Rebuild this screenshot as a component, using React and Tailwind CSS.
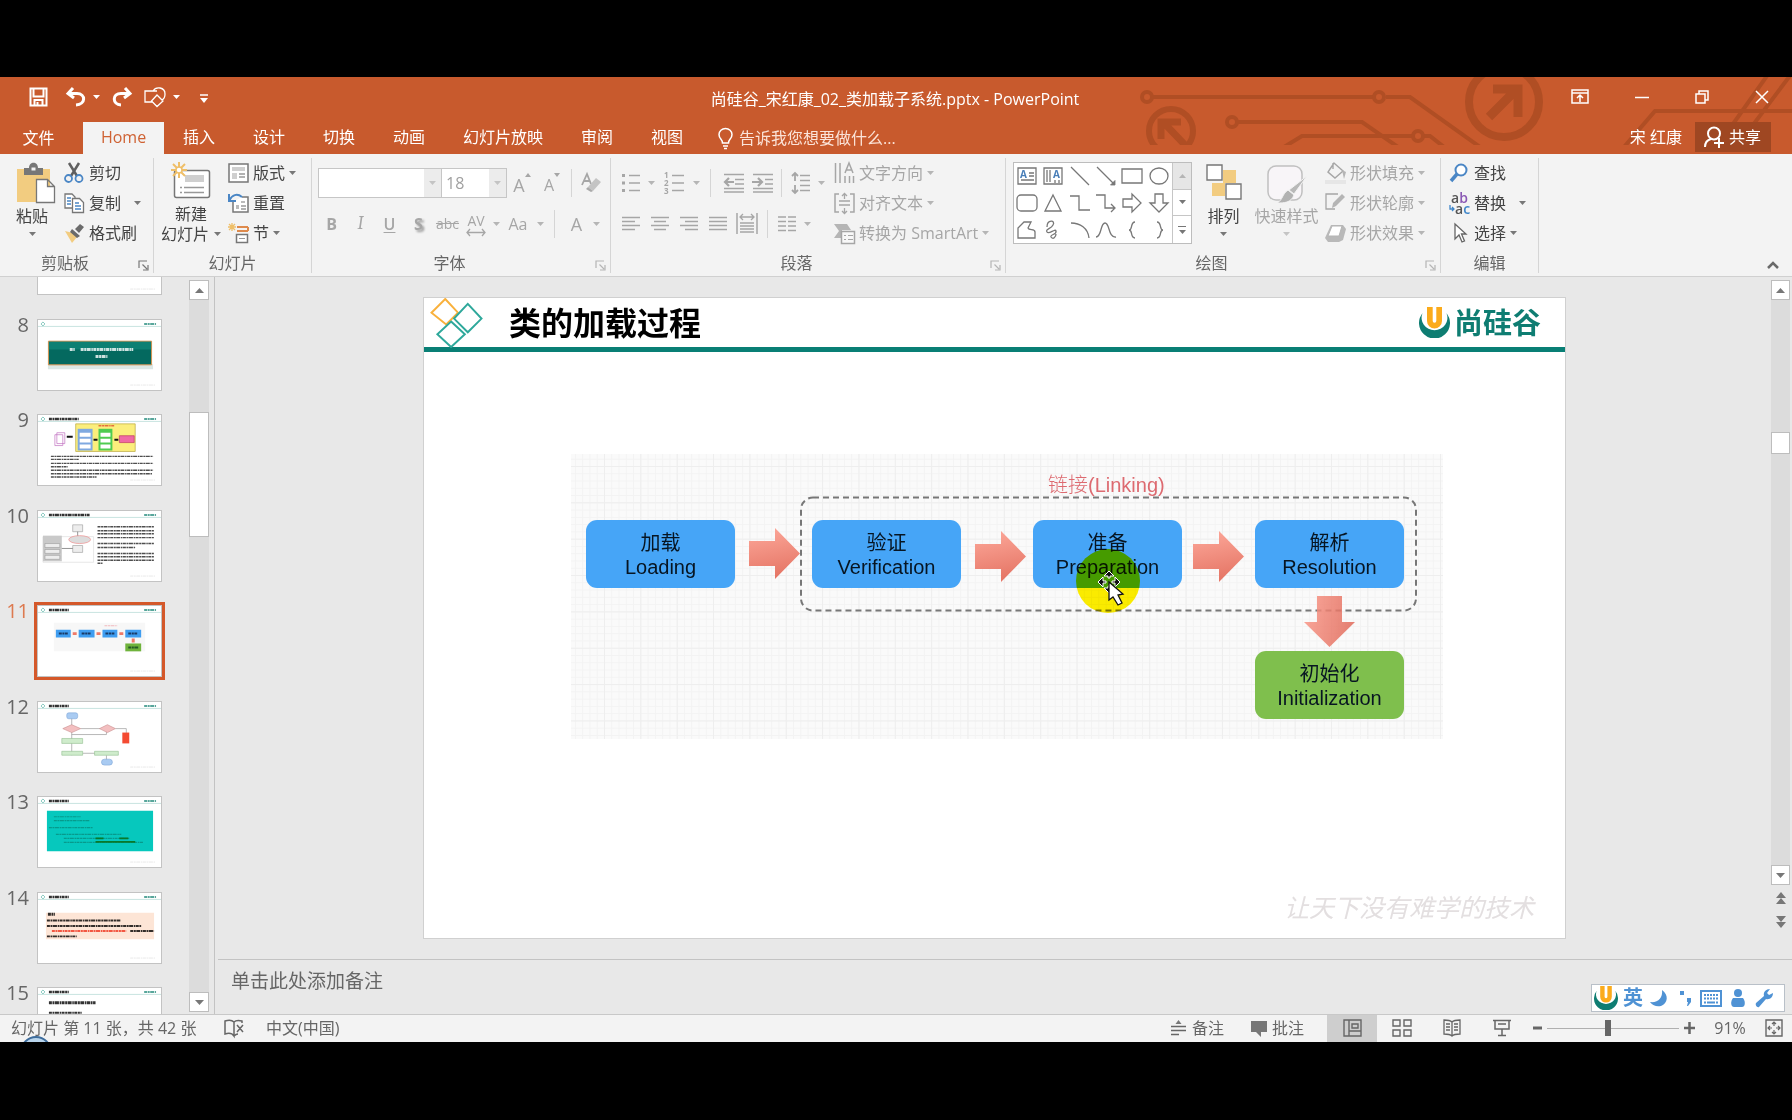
import React from "react";

const cx = (...names) => names.filter(Boolean).join(" ");

/* ---------- small shared pieces ---------- */

function Caret({ className = "text-[#777]" }) {
  return (
    <svg className={cx("h-1 w-[7px] shrink-0", className)} viewBox="0 0 7 4" fill="currentColor">
      <path d="M0 0h7L3.500 4z" />
    </svg>
  );
}

function Svg({ w = 20, h = 20, children, className }) {
  return (
    <svg width={w} height={h} viewBox={`0 0 ${w} ${h}`} fill="none" className={cx("shrink-0 overflow-visible", className)} aria-hidden="true">
      {children}
    </svg>
  );
}

function ULogo({ className }) {
  return (
    <svg viewBox="0 0 30 30" className={className} fill="none" aria-hidden="true">
      <path d="M3.400 6A15 15 0 1 0 26.600 6A12.500 12 0 1 1 3.400 6z" fill="#0e7d72" />
      <path d="M10.500 0v13.500c0 6 9 6 9 0V0" stroke="#fbab1b" strokeWidth="5.500" />
    </svg>
  );
}

function Group({ label, width, launcher, children }) {
  return (
    <section className={cx("flex shrink-0 flex-col border-r border-[#d5d5d5]", width)} aria-label={label}>
      <div className="flex h-[95px]">{children}</div>
      <div className="flex h-5 items-center">
        <h2 className="flex-1 text-center">{label}</h2>
        {launcher && (
          <button type="button" aria-label={`${label}设置`} className={cx("mt-1 pr-1 pl-2", launcher)}>
            <Svg w={11} h={11}>
              <path d="M1 8V1h8M4.500 4.500L9 9M10 5v5H5" stroke="currentColor" strokeWidth="1.200" />
            </Svg>
          </button>
        )}
      </div>
    </section>
  );
}

function RowButton({ icon, label, caret, wide, disabled }) {
  return (
    <button
      type="button"
      disabled={disabled}
      className={cx("flex h-[30px] items-center whitespace-nowrap", disabled ? "text-[#a6a6a6]" : "text-[#444]")}
    >
      <span className="flex w-[25px] shrink-0 items-center">{icon}</span>
      {label}
      {caret && <Caret className={cx(wide ? "ml-[13px]" : "ml-1", disabled ? "text-[#b5b5b5]" : "text-[#777]")} />}
    </button>
  );
}

function Cell({ children, width = "w-[29px]", label }) {
  return (
    <button type="button" disabled aria-label={label} className={cx("flex h-7 shrink-0 items-center justify-center text-[#a6a6a6]", width)}>
      {children}
    </button>
  );
}

const CaretCell = () => (
  <span className="flex w-3 justify-center">
    <Caret className="text-[#b5b5b5]" />
  </span>
);

const Rule = ({ className }) => <span className={cx("h-7 w-px bg-[#d5d5d5]", className)} />;

/* ---------- title bar ---------- */

function Circuit() {
  return (
    <svg className="pointer-events-none absolute top-0 right-0 h-[68px] w-[652px]" viewBox="0 0 652 68" fill="none" stroke="#b04e24" aria-hidden="true">
      <g strokeWidth="4">
        <circle cx="7" cy="20" r="5" />
        <path d="M12 20h222M246 20h24L340 70" />
        <circle cx="239" cy="20" r="5" />
        <circle cx="92" cy="45" r="5" />
        <path d="M97 45h125L258 70" />
        <path d="M144 70l18-11h111M284 59h6l14 11" />
        <circle cx="278" cy="59" r="5" />
        <path d="M484 70l31-36h137M581 64L629-4M601 64L652-4" />
      </g>
      <circle cx="31" cy="54" r="22" strokeWidth="6" />
      <path d="M45 68L24 46M21 62V45h20" strokeWidth="7" />
      <circle cx="364" cy="25" r="35" strokeWidth="8" />
      <path d="M349 40L376 13M353 12h25v28" strokeWidth="9" />
    </svg>
  );
}

function TitleBar() {
  return (
    <div className="relative flex h-[45px] items-center pb-1 text-white">
      <div className="flex w-[230px] items-center pb-[2px] pl-[29px]">
        <button type="button" aria-label="保存">
          <Svg w={19} h={20}>
            <path d="M1.500 1.500h16v17h-16zM4.500 1.500v8h10v-8M5.500 18v-5h8v5M8.500 18v-3" stroke="currentColor" strokeWidth="2" />
          </Svg>
        </button>
        <button type="button" aria-label="撤消" className="ml-[18px] flex items-center gap-[7px]">
          <Svg w={20} h={20}>
            <path d="M7 1L2 6.500 8 11M2.500 6.500H11c9 0 9 11-1 11.500" stroke="currentColor" strokeWidth="3" />
          </Svg>
          <Caret className="text-white" />
        </button>
        <button type="button" aria-label="恢复" className="ml-3">
          <Svg w={20} h={20}>
            <path d="M13 1l5 5.500-6 4.500M17.500 6.500H9c-9 0-9 11 0 11.500" stroke="currentColor" strokeWidth="3" />
          </Svg>
        </button>
        <button type="button" aria-label="形状" className="ml-3 flex items-center gap-[7px]">
          <Svg w={22} h={20}>
            <path d="M8 15H1V4h12M9 4c3-5 12-4 12 3 0 3-1 5-3 6M13 8l6 6-6 5.500L7.500 14z" stroke="currentColor" strokeWidth="1.300" />
          </Svg>
          <Caret className="text-white" />
        </button>
        <button type="button" aria-label="自定义快速访问工具栏" className="mt-1 ml-5">
          <Svg w={9} h={9}>
            <path d="M0 1h8" stroke="currentColor" strokeWidth="1.500" />
            <path d="M0 4h8L4 9z" fill="currentColor" />
          </Svg>
        </button>
      </div>
      <h1 className="mt-[2px] flex-1 pr-[2px] text-center">尚硅谷_宋红康_02_类加载子系统.pptx - PowerPoint</h1>
      <div className="flex w-[230px] items-center justify-end pr-[23px] pb-[2px]">
        <button type="button" aria-label="功能区显示选项">
          <Svg w={18} h={15}>
            <path d="M1 1h16v13H1zM1 4h16M9 13V6.500M6 9l3-3 3 3" stroke="currentColor" strokeWidth="1.500" />
          </Svg>
        </button>
        <button type="button" aria-label="最小化" className="ml-[46px]">
          <Svg w={14} h={14}>
            <path d="M0 7.500h14" stroke="currentColor" strokeWidth="1.500" />
          </Svg>
        </button>
        <button type="button" aria-label="还原" className="ml-[46px]">
          <Svg w={14} h={14}>
            <path d="M1 4h9v9H1zM4 4V1h9v9h-3" stroke="currentColor" strokeWidth="1.500" />
          </Svg>
        </button>
        <button type="button" aria-label="关闭" className="ml-[46px]">
          <Svg w={14} h={14}>
            <path d="M1 1l12 12M13 1L1 13" stroke="currentColor" strokeWidth="1.500" />
          </Svg>
        </button>
      </div>
    </div>
  );
}

function TabBar() {
  const tabs = ["插入", "设计", "切换", "动画", "幻灯片放映", "审阅", "视图"];
  return (
    <nav className="relative flex h-8 text-white">
      <button type="button" className="w-[83px] pr-2 pl-[2px]">文件</button>
      <button type="button" aria-current="page" className="w-[81px] bg-[#f3f3f3] pb-[2px] text-[#cf6233]">Home</button>
      {tabs.map((t) => (
        <button type="button" key={t} className="px-[19px] pb-[2px]">{t}</button>
      ))}
      <label className="ml-4 flex items-center gap-[6px]">
        <Svg w={15} h={21}>
          <path d="M4.500 15c0-4-3.500-4-3.500-8.500a6.500 6 0 0 1 13 0C14 11 10.500 11 10.500 15zM5 18h5M6 20.500h3" stroke="currentColor" strokeWidth="1.500" />
        </Svg>
        <input aria-label="告诉我您想要做什么" placeholder="告诉我您想要做什么..." className="w-44 bg-transparent outline-none placeholder:text-[#fbe3d8]" />
      </label>
      <div className="ml-auto flex items-start pr-[21px]">
        <button type="button" className="mr-[13px] h-[30px]">宋 红康</button>
        <button type="button" className="flex h-[30px] w-[76px] items-center gap-1 bg-[#9f4722] pl-2">
          <Svg w={22} h={22}>
            <circle cx="11" cy="7.500" r="6" stroke="currentColor" strokeWidth="2" />
            <path d="M2 21c0-4 2-7 6-8M16 12v10M11 17h10" stroke="currentColor" strokeWidth="2" />
          </Svg>
          共享
        </button>
      </div>
    </nav>
  );
}

/* ---------- ribbon ---------- */

function ClipboardGroup() {
  return (
    <Group label="剪贴板" width="w-[154px]" launcher="text-[#777]">
      <button type="button" className="flex w-16 flex-col items-center text-[#444]">
        <Svg w={40} h={42} className="mt-1 ml-2">
          <path d="M1 7h33v33H1z" fill="#f2cc80" />
          <path d="M8 6h5c0-7 9-7 9 0h5v7H8z" fill="#777" />
          <path d="M15.500 5.500h4v3h-4z" fill="#f3f3f3" />
          <path d="M20.500 17.500h11l7 7v16h-18zM31.500 17.500v7h7" fill="#fff" stroke="#777" strokeWidth="1.300" />
        </Svg>
        <span className="h-6 leading-6">粘贴</span>
        <Caret className="mt-1 text-[#777]" />
      </button>
      <div className="flex flex-col items-start">
        <RowButton
          label="剪切"
          icon={
            <Svg>
              <path d="M5 0l8 13M15 0L7 13" stroke="#5f5f5f" strokeWidth="2.500" />
              <circle cx="4.500" cy="15.500" r="3.500" stroke="#4a86c5" strokeWidth="1.800" />
              <circle cx="15" cy="15.500" r="3.500" stroke="#4a86c5" strokeWidth="1.800" />
            </Svg>
          }
        />
        <RowButton
          label="复制"
          caret
          wide
          icon={
            <Svg>
              <path d="M1 1h7l3 3v11H1z" fill="#fff" stroke="#777" strokeWidth="1.300" />
              <path d="M3 5h4M3 8h4M3 11h4" stroke="#4a86c5" strokeWidth="1.300" />
              <path d="M8.500 5.500h7l4 4v10h-11z" fill="#fff" stroke="#777" strokeWidth="1.300" />
              <path d="M11 10h4M11 13h6M11 16h6" stroke="#4a86c5" strokeWidth="1.300" />
            </Svg>
          }
        />
        <RowButton
          label="格式刷"
          icon={
            <Svg>
              <path d="M1 8l8 2 4 4-5 6z" fill="#f2cc80" />
              <path d="M8 6l8 7-3 2-7-6zM11 6l5-5 4 3-5 6z" fill="#6b6b6b" />
            </Svg>
          }
        />
      </div>
    </Group>
  );
}

function SlidesGroup() {
  return (
    <Group label="幻灯片" width="w-[158px]">
      <button type="button" className="flex w-[74px] flex-col items-center text-[#444]">
        <Svg w={40} h={38} className="mt-1">
          <rect x="3.500" y="8.500" width="35" height="27" rx="2" fill="#fff" stroke="#777" strokeWidth="1.500" />
          <path d="M14 13h19v7H14z" fill="#cfcfcf" />
          <path d="M9 25.500h2M9 30.500h2M13 25.500h20M13 30.500h20" stroke="#999" strokeWidth="1.300" />
          <path d="M8 0v16M0 8h16M2 2l12 12M14 2L2 14" stroke="#efbf68" strokeWidth="2" />
          <circle cx="8" cy="8" r="3" fill="#fff" stroke="#efbf68" strokeWidth="1.500" />
        </Svg>
        <span className="mt-1 h-5 leading-5">新建</span>
        <span className="flex h-5 items-center gap-[5px] leading-5 whitespace-nowrap">
          幻灯片 <Caret />
        </span>
      </button>
      <div className="flex flex-col items-start">
        <RowButton
          label="版式"
          caret
          icon={
            <Svg w={21}>
              <path d="M1 1h19v18H1z" fill="#fff" stroke="#777" strokeWidth="1.500" />
              <path d="M4 4h13v4H4zM4 10h5v6H4z" fill="#cfcfcf" />
              <path d="M11 11h6M11 14h6" stroke="#999" strokeWidth="1.300" />
            </Svg>
          }
        />
        <RowButton
          label="重置"
          icon={
            <Svg w={21}>
              <path d="M5 9v10h15V4h-6" fill="#fff" stroke="#777" strokeWidth="1.500" />
              <path d="M8 12h3v4H8zM13 8h4v2h-4z" fill="#bbb" />
              <path d="M13 13h5M13 16h5" stroke="#999" strokeWidth="1.300" />
              <path d="M1 1v7h7M1.500 7C4 2 9 0 14 4" stroke="#4a86c5" strokeWidth="2" />
            </Svg>
          }
        />
        <RowButton
          label="节"
          caret
          icon={
            <Svg w={21}>
              <path d="M4 0v8M0 4h8M1 1l6 6M7 1L1 7" stroke="#efbf68" strokeWidth="1.300" />
              <path d="M9 4h11M9 8h11M20 4v4" stroke="#de8a4c" strokeWidth="2" />
              <path d="M8.500 11.500h11v8h-11z" fill="#fff" stroke="#777" strokeWidth="1.500" />
              <path d="M11 15.500h6" stroke="#999" />
            </Svg>
          }
        />
      </div>
    </Group>
  );
}

function FontGroup() {
  return (
    <Group label="字体" width="w-[299px]" launcher="text-[#b5b5b5]">
      <div className="flex flex-col">
        <div className="mt-[10px] flex h-[30px] items-center pl-[6px]">
          <div className="relative">
            <select aria-label="字体" className="block h-[30px] w-[124px] appearance-none border border-[#c6c6c6] bg-white outline-none">
              <option> </option>
            </select>
            <span className="pointer-events-none absolute inset-y-px right-px flex w-[17px] items-center justify-center bg-[#ececec]">
              <Caret className="text-[#c4c4c4]" />
            </span>
          </div>
          <div className="relative">
            <select aria-label="字号" className="block h-[30px] w-[65px] appearance-none border border-l-0 border-[#c6c6c6] bg-white pl-1 text-[#a0a0a0] outline-none">
              <option>18</option>
            </select>
            <span className="pointer-events-none absolute inset-y-px right-px flex w-[17px] items-center justify-center bg-[#ececec]">
              <Caret className="text-[#c4c4c4]" />
            </span>
          </div>
          <Cell label="增大字号" width="w-[30px]">
            <span className="pt-1 text-lg">A</span>
            <svg className="mb-4 h-1 w-[6px]" viewBox="0 0 6 4" fill="currentColor"><path d="M0 4h6L3 0z" /></svg>
          </Cell>
          <Cell label="减小字号" width="w-[30px]">
            <span className="pt-1">A</span>
            <svg className="mb-4 h-1 w-[6px]" viewBox="0 0 6 4" fill="currentColor"><path d="M0 0h6L3 4z" /></svg>
          </Cell>
          <Rule className="ml-1" />
          <Cell label="清除格式" width="w-[38px]">
            <Svg>
              <path d="M1 12L6 1l4 10M3 8h6" stroke="currentColor" strokeWidth="1.800" />
              <path d="M7 14l8-9 5 4-8 9z" fill="#c4c4c4" />
              <path d="M5 16l2-2 5 4-2 1z" fill="#a9a9a9" />
            </Svg>
          </Cell>
        </div>
        <div className="mt-3 flex h-7 items-center pl-[5px]">
          <Cell label="加粗"><b>B</b></Cell>
          <Cell label="倾斜"><i className="font-serif text-lg">I</i></Cell>
          <Cell label="下划线"><span className="font-semibold underline underline-offset-2">U</span></Cell>
          <Cell label="文字阴影"><b className="drop-shadow-[2px_2px_1px_#999]">S</b></Cell>
          <Cell label="删除线"><span className="text-sm line-through">abc</span></Cell>
          <Cell label="字符间距" width="w-7">
            <span className="flex flex-col items-center">
              <span className="h-4 text-sm leading-4">AV</span>
              <Svg w={20} h={7}>
                <path d="M1 3.500h18M4 0L1 3.500 4 7M16 0l3 3.500L16 7" stroke="currentColor" strokeWidth="1.300" />
              </Svg>
            </span>
          </Cell>
          <CaretCell />
          <Cell label="更改大小写" width="w-8">Aa</Cell>
          <CaretCell />
          <Rule className="mx-2" />
          <Cell label="字体颜色" width="w-[27px]"><span className="text-lg">A</span></Cell>
          <CaretCell />
        </div>
      </div>
    </Group>
  );
}

function Lines({ rows }) {
  return (
    <Svg>
      {rows.map(([a, b], i) => (
        <path key={i} d={`M${a} ${3.5 + i * 4}H${b}`} stroke="currentColor" strokeWidth="1.500" />
      ))}
    </Svg>
  );
}

function ParagraphGroup() {
  return (
    <Group label="段落" width="w-[395px]" launcher="text-[#b5b5b5]">
      <div className="w-[223px] pl-[5px]">
        <div className="mt-[11px] flex h-7 items-center">
          <Cell label="项目符号">
            <Svg>
              <path d="M1 2.500h3M1 10h3M1 17.500h3" stroke="currentColor" strokeWidth="3" />
              <path d="M8 2.500h11M8 10h11M8 17.500h11" stroke="currentColor" strokeWidth="1.500" />
            </Svg>
          </Cell>
          <CaretCell />
          <Cell label="编号" width="w-[33px]">
            <Svg w={20} h={22}>
              <g fill="currentColor" fontSize="8" fontWeight="bold">
                <text x="0" y="6">1</text>
                <text x="0" y="14">2</text>
                <text x="0" y="22">3</text>
              </g>
              <path d="M8 3.500h12M8 11h12M8 18.500h12" stroke="currentColor" strokeWidth="1.500" />
            </Svg>
          </Cell>
          <CaretCell />
          <Rule className="mx-2" />
          <Cell label="减少缩进">
            <Svg w={22}>
              <path d="M1 1.500h20M12 6.500h9M12 11h9M1 15.500h20M1 19h20" stroke="currentColor" strokeWidth="1.500" />
              <path d="M11 9H2M6 5L2 9l4 4" stroke="currentColor" strokeWidth="2.200" />
            </Svg>
          </Cell>
          <Cell label="增加缩进">
            <Svg w={22}>
              <path d="M1 1.500h20M13 6.500h8M13 11h8M1 15.500h20M1 19h20" stroke="currentColor" strokeWidth="1.500" />
              <path d="M0 9h9M6 5l4 4-4 4" stroke="currentColor" strokeWidth="2.200" />
            </Svg>
          </Cell>
          <Rule className="mx-1" />
          <Cell label="行距">
            <Svg w={20} h={22}>
              <path d="M4 1v8M1 4l3-3 3 3M4 13v8M1 18l3 3 3-3" stroke="currentColor" strokeWidth="1.800" />
              <path d="M9 3.500h10M9 8.500h10M9 13.500h10M9 18.500h10" stroke="currentColor" strokeWidth="1.500" />
            </Svg>
          </Cell>
          <CaretCell />
        </div>
        <div className="mt-[13px] flex h-7 items-center">
          <Cell label="左对齐"><Lines rows={[[1, 19], [1, 14], [1, 19], [1, 14]]} /></Cell>
          <Cell label="居中"><Lines rows={[[1, 19], [4, 16], [1, 19], [4, 16]]} /></Cell>
          <Cell label="右对齐"><Lines rows={[[1, 19], [6, 19], [1, 19], [6, 19]]} /></Cell>
          <Cell label="两端对齐"><Lines rows={[[1, 19], [1, 19], [1, 19], [1, 19]]} /></Cell>
          <Cell label="分散对齐">
            <Svg w={22} h={22}>
              <path d="M1 0v21M21 0v21M4 10h14M4 13h14M4 16h14M4 19h14" stroke="currentColor" strokeWidth="1.500" />
              <path d="M4 4h14M7 1L4 4l3 3M15 1l3 3-3 3" stroke="currentColor" strokeWidth="1.300" />
            </Svg>
          </Cell>
          <Rule className="mr-1 ml-[6px]" />
          <Cell label="分栏">
            <Svg>
              <path d="M1 3h8M1 7.500h8M1 12h8M1 16.500h8M11 3h8M11 7.500h8M11 12h8M11 16.500h8" stroke="currentColor" strokeWidth="1.600" />
            </Svg>
          </Cell>
          <CaretCell />
        </div>
      </div>
      <div className="flex flex-col items-start">
        <RowButton
          label="文字方向"
          caret
          disabled
          icon={
            <Svg w={21} h={22}>
              <path d="M1.500 1v20M6 1v20M11 14v7M15.500 14v7M19.500 14v7M11 11l4-10 4 10M12 8h6" stroke="currentColor" strokeWidth="1.500" />
            </Svg>
          }
        />
        <RowButton
          label="对齐文本"
          caret
          disabled
          icon={
            <Svg w={21} h={21}>
              <path d="M5 1H1v18h4M16 1h4v18h-4" stroke="currentColor" strokeWidth="1.500" />
              <path d="M10.500 6V1M8 3l2.500-2.500L13 3M10.500 15v5M8 18l2.500 2.500L13 18M5 8h11M5 12h11" stroke="currentColor" strokeWidth="1.300" />
            </Svg>
          }
        />
        <RowButton
          label="转换为 SmartArt"
          caret
          disabled
          icon={
            <Svg w={21} h={21}>
              <path d="M0 1h13l4 6H8v8H0l5-7z" fill="#b5b5b5" />
              <path d="M7.500 8.500h13v12h-13z" fill="#f8f8f8" stroke="currentColor" strokeWidth="1.500" />
              <path d="M10 12.500h2M10 16.500h2M14 12.500h5M14 16.500h5" stroke="currentColor" strokeWidth="1.200" />
            </Svg>
          }
        />
      </div>
    </Group>
  );
}

const shapes = [
  <g key="a"><path d="M1 2h18v16H1zM12 7h5M12 10h5M4 14h13" /><text x="3" y="12" fontSize="10" fontWeight="bold" fill="#4a7fb8" stroke="none">A</text></g>,
  <g key="b"><path d="M1 2h18v16H1zM4 4v12M7 4v12M12 14v3M16 14v3" /><text x="10" y="12" fontSize="10" fontWeight="bold" fill="#4a7fb8" stroke="none">A</text></g>,
  <path key="c" d="M1 1l18 18" />,
  <g key="d"><path d="M1 1l17 17" /><path d="M19 19v-4.500L14.500 19z" fill="#777" strokeWidth=".8" /></g>,
  <path key="e" d="M0 3h20v14H0z" />,
  <ellipse key="f" cx="10" cy="10" rx="9" ry="8" />,
  <rect key="g" x="0" y="2" width="20" height="16" rx="4" />,
  <path key="h" d="M10 2l8 16H2z" />,
  <path key="i" d="M0 3h9v14h11" />,
  <path key="j" d="M0 2h9v13h9M15 11l4 4-4 4" />,
  <path key="k" d="M1 6h9V1l9 9-9 9v-5H1z" />,
  <path key="l" d="M6 1v9H1l9 9 9-9h-5V1z" />,
  <path key="m" d="M1 18V8l6-6h7l-3 6c1 3 7 0 7 4v6z" />,
  <path key="n" d="M4 7c0-8 9-7 6-2-2 4-8 4-6 7s8-4 9-1c1 4-6 3-5 6 2 3 5 0 5-3" />,
  <path key="o" d="M1 3c9 0 17 5 18 15" />,
  <path key="p" d="M0 17C6 17 4 3 9 3s3 15 11 14" />,
  <path key="q" d="M13 2c-5 0-2 8-6 8 4 0 1 8 6 8" />,
  <path key="r" d="M8 2c5 0 2 8 6 8-4 0-1 8-6 8" />,
];

function DrawingGroup() {
  return (
    <Group label="绘图" width="w-[435px]" launcher="text-[#b5b5b5]">
      <div className="mt-1 ml-[7px] flex h-[82px] w-[179px] shrink-0 border border-[#bdbdbd] bg-white">
        <div className="grid flex-1 grid-cols-6 grid-rows-3">
          {shapes.map((shape, i) => (
            <button type="button" key={i} aria-label={`形状 ${i + 1}`} className="flex items-center justify-center">
              <svg className="size-5 overflow-visible" viewBox="0 0 20 20" fill="none" stroke="#777" strokeWidth="1.300">{shape}</svg>
            </button>
          ))}
        </div>
        <div className="grid w-[19px] grid-rows-3 divide-y divide-[#c6c6c6] border-l border-[#c6c6c6]">
          <button type="button" aria-label="上一行" className="flex items-center justify-center bg-[#e6e6e6]">
            <Caret className="rotate-180 text-[#b5b5b5]" />
          </button>
          <button type="button" aria-label="下一行" className="flex items-center justify-center"><Caret /></button>
          <button type="button" aria-label="其他" className="flex flex-col items-center justify-center gap-[3px]">
            <span className="h-px w-2 bg-[#777]" />
            <Caret />
          </button>
        </div>
      </div>
      <button type="button" className="ml-[7px] flex w-[49px] flex-col items-center text-[#444]">
        <Svg w={36} h={38} className="mt-[6px]">
          <path d="M17 6h13v13H17zM6 19h13v13H6z" fill="#f2cc80" />
          <path d="M1 1h15v15H1zM20 20h15v15H20z" fill="#fff" stroke="#777" strokeWidth="1.400" />
        </Svg>
        <span className="mt-[2px] h-6 leading-6">排列</span>
        <Caret className="mt-1 text-[#777]" />
      </button>
      <button type="button" disabled className="flex w-[77px] flex-col items-center whitespace-nowrap text-[#a6a6a6]">
        <Svg w={40} h={40} className="mt-[6px]">
          <rect x="1" y="2" width="34" height="34" rx="8" fill="#f8f5f8" stroke="#c0c0c0" strokeWidth="1.500" />
          <path d="M40 12L27 30l-5-4z" fill="#b9b9b9" stroke="#f3f3f3" />
          <path d="M21 26l6 5c-3 8-10 8-17 8 6-3 5-9 11-13z" fill="#b2b2b2" stroke="#f3f3f3" />
        </Svg>
        <span className="h-6 leading-6">快速样式</span>
        <Caret className="mt-1 text-[#c4c4c4]" />
      </button>
      <div className="flex flex-col items-start">
        <RowButton
          label="形状填充"
          caret
          disabled
          icon={
            <Svg w={21} h={22}>
              <path d="M8 1v6M5 7l4-6 9 8-8 7-7-6z" stroke="currentColor" strokeWidth="1.400" />
              <path d="M17 8l4 2-2 7z" fill="#b5b5b5" />
              <path d="M0 18h21v4H0z" fill="#e6e6e6" />
            </Svg>
          }
        />
        <RowButton
          label="形状轮廓"
          caret
          disabled
          icon={
            <Svg w={21} h={21}>
              <path d="M13 1H1v15h9" stroke="currentColor" strokeWidth="1.300" />
              <path d="M17 1l3 3-9 9-4 2 1-5z" fill="#b5b5b5" />
            </Svg>
          }
        />
        <RowButton
          label="形状效果"
          caret
          disabled
          icon={
            <Svg w={21} h={21}>
              <path d="M6 2h12l3 4-3 11-4 2H3l-3-4z" fill="#b9b9b9" />
              <path d="M7 3h10l-3 10H3z" fill="#fff" stroke="#b5b5b5" />
            </Svg>
          }
        />
      </div>
    </Group>
  );
}

function EditingGroup() {
  return (
    <Group label="编辑" width="w-[98px]">
      <div className="flex flex-col items-start pl-2">
        <RowButton
          label="查找"
          icon={
            <Svg>
              <circle cx="12" cy="7" r="5.500" fill="#fff" stroke="#4a86c5" strokeWidth="2" />
              <path d="M8 11l-6 7" stroke="#4a86c5" strokeWidth="3.500" />
            </Svg>
          }
        />
        <RowButton
          label="替换"
          caret
          wide
          icon={
            <span className="flex flex-col text-[14px] leading-[11px] font-semibold text-[#555]">
              <span>a<span className="text-[#8a58b4]">b</span></span>
              <span className="flex items-center">
                <Svg w={6} h={8}>
                  <path d="M1 0v4h4M3 2l2 2-2 2" stroke="#3f86c9" strokeWidth="1.300" />
                </Svg>
                a<span className="text-[#3f86c9]">c</span>
              </span>
            </span>
          }
        />
        <RowButton
          label="选择"
          caret
          icon={
            <Svg>
              <path d="M6 1v15l4-4 3 7 2.500-1-3-7H17z" fill="#fff" stroke="#666" strokeWidth="1.300" />
            </Svg>
          }
        />
      </div>
    </Group>
  );
}

function Ribbon() {
  return (
    <div className="flex h-[123px] border-b border-[#d0d0d0] bg-[#f3f3f3] pt-1 pb-[3px] text-[#666]">
      <ClipboardGroup />
      <SlidesGroup />
      <FontGroup />
      <ParagraphGroup />
      <DrawingGroup />
      <EditingGroup />
      <button type="button" aria-label="折叠功能区" className="mt-auto mr-[13px] mb-1 ml-auto">
        <Svg w={12} h={8}>
          <path d="M1 7l5-5 5 5" stroke="#6a6a6a" strokeWidth="2.500" />
        </Svg>
      </button>
    </div>
  );
}

/* ---------- thumbnails ---------- */

function TinyText({ x, y, w, color = "#222", h = 2 }) {
  return <path d={`M${x} ${y}h${w}`} stroke={color} strokeWidth={h} strokeDasharray="3 .6 2 .5 4 .7 1.500 .5" opacity=".8" />;
}

function ThumbHeader({ title = 0 }) {
  return (
    <g>
      <path d="M0 6.500h124" stroke="#b9dcd8" strokeWidth=".8" />
      <path d="M3 4l2-2 2 2-2 2z" stroke="#6cbcb0" strokeWidth=".8" fill="none" />
      <TinyText x={107} y={4} w={12} color="#2f9183" />
      {title > 0 && <TinyText x={11} y={4} w={title} h={2.600} color="#000" />}
      <TinyText x={93} y={66} w={25} color="#e4e4e4" h={1} />
    </g>
  );
}

const thumbArt = {
  7: null,
  8: (
    <g>
      <path d="M10 45h106v5H10z" fill="#dbe7e5" />
      <path d="M10.500 21.500h104v24h-104z" fill="#04695f" stroke="#d8924f" />
      <path d="M11 22h103v8H11z" fill="#0d8073" />
      <TinyText x={32} y={30} w={5} color="#fff" h={3} />
      <TinyText x={43} y={30} w={53} color="#fff" h={3} />
      <TinyText x={58} y={37} w={12} color="#fff" h={3} />
    </g>
  ),
  9: (
    <g>
      <path d="M38 9h60v28H38z" fill="#fbee7c" stroke="#b8a640" strokeWidth=".7" />
      <path d="M17 20h8v11h-8zM19 18h8v11h-8z" fill="#fff" stroke="#c06fc0" strokeWidth=".7" />
      <path d="M29 22h6M56 25h4M77 25h4" stroke="#111" strokeWidth="2" />
      <path d="M40 14h15v22H40z" fill="#7fa9e0" />
      <path d="M61 14h14v22H61z" fill="#4fcc50" />
      <path d="M42 18h11v4H42zM42 24h11v4H42zM42 30h11v4H42zM63 18h10v4H63zM63 24h10v4H63zM63 30h10v4H63z" fill="#fff" />
      <path d="M82 21h15v7H82z" fill="#f069a4" stroke="#b52a60" strokeWidth=".6" />
      <TinyText x={61} y={11} w={16} color="#e0532a" h={1.500} />
      <TinyText x={13} y={42} w={103} h={1.300} />
      <TinyText x={13} y={45} w={28} h={1.300} />
      <TinyText x={13} y={49} w={103} h={1.300} />
      <TinyText x={13} y={52.500} w={17} h={1.300} />
      <TinyText x={13} y={56} w={103} h={1.500} />
      <TinyText x={13} y={59.500} w={102} h={1.500} />
      <TinyText x={13} y={63} w={46} h={1.500} />
    </g>
  ),
  10: (
    <g>
      <path d="M5 26h51v26H5z" stroke="#d8d8d8" strokeWidth=".6" fill="none" />
      <path d="M5 25h19v26H5z" fill="#c9c9c9" />
      <path d="M7 33h15v4H7zM7 39h15v4H7zM7 45h15v4H7zM35 14h10v7H35zM35 35h10v7H35z" fill="#ededed" stroke="#999" strokeWidth=".6" />
      <ellipse cx="42" cy="29" rx="11" ry="4" fill="#dcdcdc" stroke="#e99" strokeWidth=".8" />
      <path d="M40 21v4M24 38h11" stroke="#666" strokeWidth=".7" />
      {[16, 20, 23, 27, 33, 37, 43, 46.5, 50].map((y, i) => (
        <TinyText key={y} x={60} y={y} w={i === 5 ? 38 : 57} h={1.500} />
      ))}
      <TinyText x={60} y={53} w={5} h={1.500} />
    </g>
  ),
  11: (
    <g>
      <path d="M16 17h92v29H16z" fill="#f7f7f7" />
      <path d="M18 24h15v8H18zM41 24h16v8H41zM65 24h15v8H65zM88 24h16v8H88z" fill="#3f9df0" />
      <path d="M88 38h16v8H88z" fill="#6fb33c" />
      <path d="M35 28h4M59 28h4M82 28h4M96 33v4" stroke="#ef7a68" strokeWidth="3" />
      <TinyText x={67} y={20} w={13} color="#f0aab0" h={1.200} />
      {[21, 44, 68, 91].map((x) => (
        <TinyText key={x} x={x} y={28} w={9} color="#124" h={2} />
      ))}
      <TinyText x={91} y={42} w={10} color="#142" h={2} />
    </g>
  ),
  12: (
    <g>
      <path d="M34 16v38M43 27h20M78 27h11v5M34 33h35v-3M45 52h13M69 54v5" stroke="#999" strokeWidth=".7" fill="none" />
      <rect x="29" y="11" width="11" height="6" rx="2" fill="#a9cbf2" stroke="#7fa7d8" strokeWidth=".6" />
      <rect x="64" y="58" width="11" height="6" rx="3" fill="#a9cbf2" stroke="#7fa7d8" strokeWidth=".6" />
      <path d="M25 27l9-4 9 4-9 4zM62 27l8-4 8 4-8 4z" fill="#f3bfc0" stroke="#c98b8c" strokeWidth=".6" />
      <path d="M85 31h7v11h-7z" fill="#f44b32" />
      <path d="M24 37h21v5H24zM24 50h21v4H24zM57 50h24v4H57z" fill="#cfeccc" stroke="#93bf90" strokeWidth=".6" />
    </g>
  ),
  13: (
    <g>
      <path d="M9 14h107v41H9z" fill="#06c8bd" />
      {[[16, 20, 27], [16, 24, 36], [11, 31, 44], [18, 38, 66], [26, 42, 66], [26, 46, 80]].map(([x, y, w]) => (
        <TinyText key={y} x={x} y={y} w={w} color="#078f80" h={1.200} />
      ))}
      <path d="M58 42h8M82 42h9M58 45.500h40" stroke="#087a2a" strokeWidth="1.800" />
    </g>
  ),
  14: (
    <g>
      <path d="M8 20h109v27H8z" fill="#fde5d6" />
      <TinyText x={10} y={21.500} w={7} color="#000" h={3} />
      <TinyText x={9} y={28} w={74} color="#000" />
      <TinyText x={9} y={33.500} w={95} color="#000" />
      <TinyText x={14} y={38.500} w={75} color="#f0341e" />
      <TinyText x={93} y={38.500} w={24} color="#000" />
      <TinyText x={9} y={44} w={30} color="#000" />
    </g>
  ),
  15: (
    <g>
      <TinyText x={11} y={15} w={47} color="#000" h={3} />
      <TinyText x={11} y={25} w={33} color="#000" />
    </g>
  ),
};

const thumbTitles = { 9: 30, 10: 41, 11: 20, 12: 20, 13: 20, 14: 20, 15: 20 };

function Thumbnail({ n }) {
  const active = n === 11;
  return (
    <li className="flex items-start">
      <span className={cx("w-[29px] text-right text-xl leading-3", active ? "text-[#dd7a50]" : "text-[#666]")}>{n}</span>
      <button
        type="button"
        aria-label={`幻灯片 ${n}`}
        className={cx("ml-2 border border-[#c3c3c3] bg-white", active && "outline-[3px] outline-[#d4582a]")}
      >
        <svg className="block h-[70px] w-[123px]" viewBox="0 0 124 71" preserveAspectRatio="none">
          <ThumbHeader title={thumbTitles[n]} />
          {thumbArt[n]}
        </svg>
      </button>
    </li>
  );
}

/* ---------- scroll bars ---------- */

function ScrollButton({ up, label }) {
  return (
    <button type="button" aria-label={label} className="flex h-5 w-full shrink-0 items-center justify-center border border-[#bdbdbd] bg-white">
      <Svg w={9} h={5}>
        <path d={up ? "M0 5h9L4.500 0z" : "M0 0h9L4.500 5z"} fill="#777" />
      </Svg>
    </button>
  );
}

function SlidePanel() {
  return (
    <aside className="flex w-[215px] shrink-0 border-r border-[#c3c3c3]">
      <div className="flex-1 overflow-hidden">
        <ol className="-mt-[54px] grid h-[860px] auto-rows-fr">
          {[7, 8, 9, 10, 11, 12, 13, 14, 15].map((n) => (
            <Thumbnail key={n} n={n} />
          ))}
        </ol>
      </div>
      <div className="mt-[3px] mr-[5px] mb-[2px] flex w-5 flex-col bg-[#dcdcdc]">
        <ScrollButton up label="向上滚动" />
        <div className="flex-1 pt-28">
          <div className="h-[125px] border border-[#bdbdbd] bg-white" />
        </div>
        <ScrollButton label="向下滚动" />
      </div>
    </aside>
  );
}

/* ---------- slide ---------- */

function Node({ place, zh, en, color = "bg-[#46a5f7]" }) {
  return (
    <div className={cx("absolute flex h-[68px] w-[149px] flex-col items-center justify-center rounded-[11px] pt-px text-xl leading-[25px] text-[#071522]", color, place)}>
      <span>{zh}</span>
      <span className="font-['Liberation_Sans','Noto_Sans_CJK_SC',sans-serif]">{en}</span>
    </div>
  );
}

function Arrow({ place, down }) {
  return (
    <svg className={cx("absolute size-[51px]", down && "rotate-90 opacity-85", place)} viewBox="0 0 51 51" aria-hidden="true">
      <defs>
        <linearGradient id="salmon" x1="0" y1="0" x2="0.2" y2="1">
          <stop offset="0" stopColor="#fda99b" />
          <stop offset="1" stopColor="#e67767" />
        </linearGradient>
        <linearGradient id="salmonDown" x1="0" y1="1" x2="0.2" y2="0">
          <stop offset="0" stopColor="#fb9a8b" />
          <stop offset="1" stopColor="#e26c5c" />
        </linearGradient>
      </defs>
      <path d="M0 13h26V0l25 25.500L26 51V38H0z" fill={down ? "url(#salmonDown)" : "url(#salmon)"} />
    </svg>
  );
}

function Diagram() {
  return (
    <div className="absolute top-[156px] left-[147px] h-[285px] w-[872px] bg-[#fafafa]">
      <svg className="absolute inset-0 size-full" aria-hidden="true">
        <defs>
          <pattern id="fine" x="33" y="12" width="7.270" height="7.270" patternUnits="userSpaceOnUse">
            <path d="M0 .5H8M.5 0V8" stroke="#f3f3f3" />
          </pattern>
          <pattern id="coarse" x="33" y="12" width="36.350" height="36.350" patternUnits="userSpaceOnUse">
            <path d="M0 .5H37M.5 0V37" stroke="#eeeeee" />
          </pattern>
        </defs>
        <rect width="100%" height="100%" fill="url(#fine)" />
        <rect width="100%" height="100%" fill="url(#coarse)" />
        <rect x="230" y="43.500" width="615" height="113" rx="12" fill="none" stroke="#777" strokeWidth="2" strokeDasharray="6 4" />
      </svg>
      <span className="absolute top-[18px] left-[477px] font-['Liberation_Sans','Noto_Sans_CJK_SC',sans-serif] text-xl leading-[26px] font-light whitespace-nowrap text-[#dd6a70]">
        链接(Linking)
      </span>
      <Node place="left-[15px] top-[66px]" zh="加载" en="Loading" />
      <Node place="left-[241px] top-[66px]" zh="验证" en="Verification" />
      <Node place="left-[462px] top-[66px]" zh="准备" en="Preparation" />
      <Node place="left-[684px] top-[66px]" zh="解析" en="Resolution" />
      <Node place="left-[684px] top-[197px]" zh="初始化" en="Initialization" color="bg-[#7fbf4d]" />
      <Arrow place="left-[178px] top-[74px]" />
      <Arrow place="left-[404px] top-[77px]" />
      <Arrow place="left-[622px] top-[77px]" />
      <Arrow place="left-[733px] top-[142px]" down />
      <div className="absolute top-[95px] left-[505px] size-16 rounded-full bg-[#fff000] mix-blend-multiply" />
      <svg className="absolute top-[116px] left-[526px] h-10 w-8" viewBox="0 0 32 40" aria-hidden="true">
        <g fill="#111" stroke="#fff" strokeWidth="1">
          <path d="M12 1l5 5h-4v2h-2V6H7zM1 12l5-5v4h3v2H6v4zM23 12l-5-5v4h-3v2h3v4zM12 23l-5-5h4v-2h2v2h4z" />
        </g>
        <path d="M12 12v18l4-3 5 8 4-2-4-8 5-1z" fill="#fff" stroke="#111" strokeWidth="1.300" />
      </svg>
    </div>
  );
}

function Slide() {
  return (
    <article className="relative h-[642px] w-[1143px] max-w-full border border-[#d0d0d0] bg-white">
      <header className="flex h-[54px] items-center border-b-[5px] border-[#097f75] pr-6 pl-[6px]">
        <svg className="h-[50px] w-[53px]" viewBox="0 0 53 51" fill="none" strokeWidth="2" aria-hidden="true">
          <path d="M15 1l13 14-12 12L1 15z" stroke="#f9b13c" fill="#fff" />
          <path d="M38 6l14 15-14 14-14-14z" stroke="#2ea89b" fill="#fff" />
          <path d="M21 24l14 13-14 13L7 37z" stroke="#2ea89b" fill="#fff" />
        </svg>
        <h2 className="ml-[26px] text-[32px] leading-none font-bold text-black">类的加载过程</h2>
        <div className="mt-1 ml-auto flex items-center gap-1 pb-1">
          <ULogo className="size-[31px]" />
          <span className="text-[29px] leading-none font-bold text-[#0e7d72]">尚硅谷</span>
        </div>
      </header>
      <Diagram />
      <p className="absolute right-[31px] bottom-[18px] text-[25px] leading-none text-[#e3dfe0] italic">让天下没有难学的技术</p>
    </article>
  );
}

function Editor() {
  return (
    <main className="flex min-w-0 flex-1 flex-col">
      <div className="flex min-h-0 flex-1">
        <div className="flex min-w-0 flex-1 justify-center overflow-hidden pt-5 pl-[3px]">
          <Slide />
        </div>
        <div className="mt-[3px] mr-[2px] flex w-[19px] flex-col">
          <div className="flex h-[605px] flex-col bg-[#dcdcdc]">
            <ScrollButton up label="向上滚动" />
            <div className="flex-1 pt-[132px]">
              <div className="h-[22px] border border-[#bdbdbd] bg-white" />
            </div>
            <ScrollButton label="向下滚动" />
          </div>
          <button type="button" aria-label="上一张幻灯片" className="mt-[7px] flex justify-center">
            <Svg w={10} h={12}>
              <path d="M5 0l5 6H0zM5 6l5 6H0z" fill="#777" />
            </Svg>
          </button>
          <button type="button" aria-label="下一张幻灯片" className="mt-3 flex justify-center">
            <Svg w={10} h={12}>
              <path d="M5 6L0 0h10zM5 12L0 6h10z" fill="#777" />
            </Svg>
          </button>
        </div>
      </div>
      <div className="relative ml-[3px] flex h-[55px] items-start border-t border-[#c3c3c3]">
        <input aria-label="备注" placeholder="单击此处添加备注" className="mt-[7px] ml-[13px] h-7 flex-1 bg-transparent text-[19px] outline-none placeholder:text-[#666]" />
        <InputMethodBar />
      </div>
    </main>
  );
}

function InputMethodBar() {
  return (
    <div className="absolute right-[7px] bottom-[2px] flex h-7 w-[194px] items-center border border-[#b9c0c8] bg-white pl-[2px] text-[#4f92d4]">
      <ULogo className="size-6" />
      <button type="button" className="ml-[5px] text-[20px] leading-none font-bold">英</button>
      <button type="button" aria-label="半角" className="ml-[7px]">
        <Svg w={18} h={18}>
          <path d="M12 1c7 5 6 13-1 16-4 1-8 0-11-4 8 1 13-4 12-12z" fill="currentColor" />
        </Svg>
      </button>
      <button type="button" aria-label="标点" className="ml-[11px]">
        <Svg w={13} h={18}>
          <path d="M1 2h4v4H1zM8 9h4v4l-3 4H8l1-4H8z" fill="currentColor" />
        </Svg>
      </button>
      <button type="button" aria-label="软键盘" className="ml-2">
        <Svg w={22} h={17}>
          <path d="M1 1h20v15H1z" stroke="currentColor" strokeWidth="2" />
          <path d="M4 5h14M4 8.500h14" stroke="currentColor" strokeWidth="2" strokeDasharray="2 1" />
          <path d="M4 12.500h2M7 12.500h8M16 12.500h2" stroke="currentColor" strokeWidth="2" />
        </Svg>
      </button>
      <button type="button" aria-label="用户" className="ml-[9px]">
        <Svg w={14} h={18}>
          <circle cx="7" cy="4" r="4" fill="currentColor" />
          <path d="M2 9h10c3 4 2 9-1 9H3c-3 0-4-5-1-9z" fill="currentColor" />
        </Svg>
      </button>
      <button type="button" aria-label="工具" className="ml-[10px]">
        <Svg w={18} h={18}>
          <path d="M1 14l8-7C8 3 11 0 15 0l-3 4 2 2 4-2c0 4-3 7-7 6l-7 8c-2 1-4-2-3-4z" fill="currentColor" />
        </Svg>
      </button>
    </div>
  );
}

/* ---------- status bar ---------- */

function StatusBar() {
  return (
    <footer className="relative flex h-7 shrink-0 items-center overflow-hidden border-t border-[#c8c8c8] bg-[#f3f3f3] pb-px text-[#666]">
      <span className="absolute top-[21px] left-5 size-8 rounded-full border-2 border-[#3d6c9c] bg-[#b9d5ec]" />
      <span className="relative w-[213px] pl-[11px] whitespace-nowrap">{"幻灯片 第 11 张\uFF0C共 42 张"}</span>
      <button type="button" aria-label="拼写检查" className="ml-[11px]">
        <Svg w={20} h={18}>
          <path d="M10 3C8 1 4 1 1 2v13c3-1 7-1 9 2V3c1-1 4-2 8-1v2M10 17c1-1 2-2 4-2M13 6l6 7M19 6l-6 7" stroke="currentColor" strokeWidth="1.500" />
        </Svg>
      </button>
      <button type="button" className="ml-[22px]">中文(中国)</button>
      <div className="ml-auto flex h-full items-center pr-[9px]">
        <button type="button" className="flex w-20 items-center gap-[6px]">
          <Svg w={15} h={18}>
            <path d="M4.500 5h6l-3-4z" fill="#777" />
            <path d="M0 7.500h15M0 11.500h15M0 15.500h8" stroke="currentColor" strokeWidth="1.500" />
          </Svg>
          备注
        </button>
        <button type="button" className="flex w-[76px] items-center gap-[5px]">
          <Svg w={16} h={17}>
            <path d="M0 1h16v11H10v5l-5-5H0z" fill="#777" />
          </Svg>
          批注
        </button>
        <button type="button" aria-label="普通视图" aria-pressed="true" className="flex h-7 w-[50px] items-center justify-center bg-[#cecece]">
          <Svg w={19} h={18}>
            <path d="M1 1h17v16H1zM6 1v16M6 12h12M9 5h6v4H9z" stroke="currentColor" strokeWidth="1.400" />
          </Svg>
        </button>
        <button type="button" aria-label="幻灯片浏览" className="flex w-[50px] justify-center">
          <Svg w={20} h={18}>
            <path d="M1 1h7v6H1zM12 1h7v6h-7zM1 11h7v6H1zM12 11h7v6h-7z" stroke="currentColor" strokeWidth="1.400" />
          </Svg>
        </button>
        <button type="button" aria-label="阅读视图" className="flex w-[49px] justify-center">
          <Svg w={18} h={18}>
            <path d="M9 3C7 1 4 1 1 1v14c3 0 6 0 8 2 2-2 5-2 8-2V1c-3 0-6 0-8 2zv14M3 5h4M3 8h4M3 11h4M11 5h4M11 8h4M11 11h4" stroke="currentColor" strokeWidth="1.300" />
          </Svg>
        </button>
        <button type="button" aria-label="幻灯片放映" className="flex w-[51px] justify-center">
          <Svg w={18} h={18}>
            <path d="M0 1.500h18M2 2v8h14V2M9 10v6M5 16.500h8M5 5h8" stroke="currentColor" strokeWidth="1.500" />
          </Svg>
        </button>
        <button type="button" aria-label="缩小" className="ml-[6px]">
          <Svg w={9} h={12}><path d="M0 6h9" stroke="currentColor" strokeWidth="3" /></Svg>
        </button>
        <input
          type="range"
          aria-label="缩放级别"
          min="0"
          max="100"
          defaultValue="46"
          className="mx-[5px] h-4 w-[132px] appearance-none bg-transparent bg-[linear-gradient(#b0b0b0,#b0b0b0)] bg-[length:100%_1px] bg-center bg-no-repeat [&::-webkit-slider-thumb]:h-4 [&::-webkit-slider-thumb]:w-[6px] [&::-webkit-slider-thumb]:appearance-none [&::-webkit-slider-thumb]:bg-[#666]"
        />
        <button type="button" aria-label="放大">
          <Svg w={11} h={12}><path d="M0 6h11M5.500 0v12" stroke="currentColor" strokeWidth="2.500" /></Svg>
        </button>
        <button type="button" className="w-[70px] text-center">91%</button>
        <button type="button" aria-label="适应窗口大小">
          <Svg w={18} h={18}>
            <path d="M1 1h16v16H1z" stroke="currentColor" strokeWidth="1.400" />
            <path d="M9 3v4M9 11v4M3 9h4M11 9h4M7 5l2-2 2 2M7 13l2 2 2-2M5 7L3 9l2 2M13 7l2 2-2 2" stroke="currentColor" strokeWidth="1.200" />
          </Svg>
        </button>
      </div>
    </footer>
  );
}

export default function App() {
  return (
    <div className="flex h-screen flex-col overflow-hidden bg-black pt-[77px] pb-[78px] font-['Open_Sans','Noto_Sans_CJK_SC',sans-serif] text-base leading-6">
      <div className="flex min-h-0 flex-1 flex-col bg-[#e8e8e8]">
        <div className="relative shrink-0 bg-[#c85a2d]">
          <Circuit />
          <TitleBar />
          <TabBar />
        </div>
        <Ribbon />
        <div className="flex min-h-0 flex-1">
          <SlidePanel />
          <Editor />
        </div>
        <StatusBar />
      </div>
    </div>
  );
}
